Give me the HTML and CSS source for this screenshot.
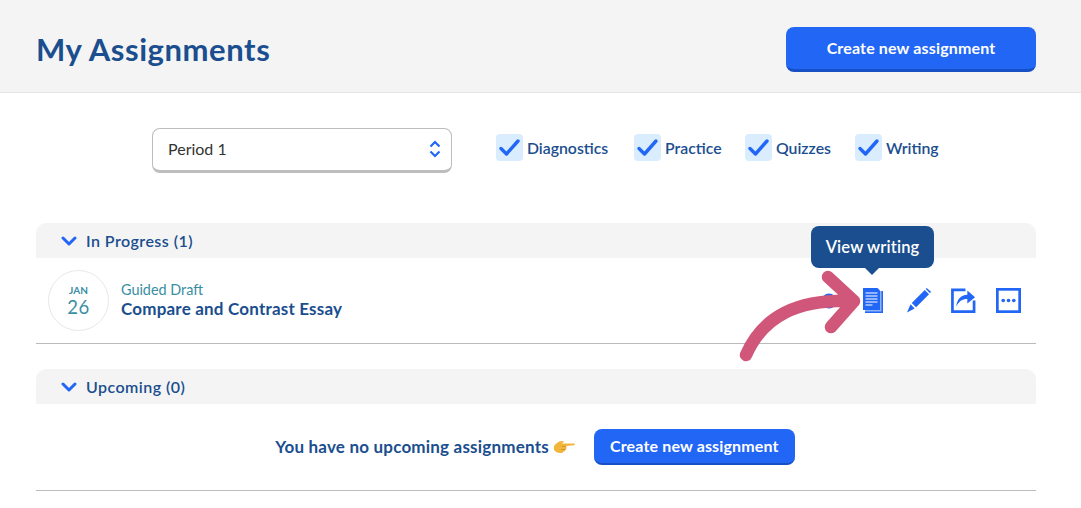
FILE: index.html
```html
<!DOCTYPE html>
<html lang="en">
<head>
<meta charset="utf-8">
<title>My Assignments</title>
<link rel="stylesheet" href="styles.css">
</head>
<body>
<header class="page-head">
  <h1 class="page-title">My Assignments</h1>
  <button class="btn btn-large">Create new assignment</button>
</header>
<section class="filters">
  <div class="select">
    <span>Period 1</span>
    <svg class="select-arrows" width="12" height="18" viewBox="0 0 12 18"><path d="M1.5 6.5 6 2l4.500 4.500M1.500 11.500 6 16l4.500-4.500" fill="none" stroke="#2266f6" stroke-width="2.200"/></svg>
  </div>
  <div class="checks">
    <label class="check"><span class="box"><svg width="27" height="27" viewBox="0 0 27 27"><path d="M5 14.500 10.500 20 22 7" fill="none" stroke="#2266f6" stroke-width="3.400" stroke-linecap="round" stroke-linejoin="round"/></svg></span>Diagnostics</label>
    <label class="check"><span class="box"><svg width="27" height="27" viewBox="0 0 27 27"><path d="M5 14.500 10.500 20 22 7" fill="none" stroke="#2266f6" stroke-width="3.400" stroke-linecap="round" stroke-linejoin="round"/></svg></span>Practice</label>
    <label class="check"><span class="box"><svg width="27" height="27" viewBox="0 0 27 27"><path d="M5 14.500 10.500 20 22 7" fill="none" stroke="#2266f6" stroke-width="3.400" stroke-linecap="round" stroke-linejoin="round"/></svg></span>Quizzes</label>
    <label class="check"><span class="box"><svg width="27" height="27" viewBox="0 0 27 27"><path d="M5 14.500 10.500 20 22 7" fill="none" stroke="#2266f6" stroke-width="3.400" stroke-linecap="round" stroke-linejoin="round"/></svg></span>Writing</label>
  </div>
</section>
<main class="lists">
  <section class="group">
    <div class="group-head">
      <svg width="16" height="10" viewBox="0 0 16 10"><path d="M2 2l6 6 6-6" fill="none" stroke="#2266f6" stroke-width="3" stroke-linecap="round" stroke-linejoin="round"/></svg>
      <span>In Progress (1)</span>
    </div>
    <div class="row">
      <div class="date"><span class="month">JAN</span><span class="day">26</span></div>
      <div class="info">
        <div class="kind">Guided Draft</div>
        <div class="name">Compare and Contrast Essay</div>
      </div>
      <div class="actions">
        <svg class="ic-hidden" width="16" height="16" viewBox="0 0 16 16"><circle cx="8" cy="8" r="7.500" fill="#2266f6"/></svg>
        <svg class="ic-doc" width="22" height="26" viewBox="0 0 22 26">
          <path d="M3 3h18v22H3z" fill="#2266f6"/>
          <path d="M3 3h16.500v20.500H3z" fill="#8fb2fb"/>
          <path d="M1 0h14.500L18 2.500V22H1z" fill="#2266f6"/>
          <path d="M3.500 5h12M3.500 8h12M3.500 11h12M3.500 14h12M3.500 17h7" stroke="#fff" stroke-width="1.200"/>
        </svg>
        <svg class="ic" width="25" height="25" viewBox="0 0 26 26"><path d="M6 15.500 19.500 2l4.500 4.500L10.500 20z" fill="#2266f6"/><path d="M20.500 1l1-1 4.500 4-1 1.500z" fill="#2266f6"/><path d="M4.800 17 9 21.200 1 25.500z" fill="#2266f6"/></svg>
        <svg class="ic" width="25" height="25" viewBox="0 0 26 26"><path d="M15 2H1.500v22.500H24V13" fill="none" stroke="#2266f6" stroke-width="2.800"/><path d="M5.500 19.500C6 12 10 7.500 17 7V2.500L25 9.500l-8 6.500v-4.500c-5.500 0-9 2.500-11.500 8z" fill="#2266f6"/></svg>
        <svg class="ic" width="25" height="25" viewBox="0 0 26 26"><rect x="1.400" y="1.400" width="23.200" height="23.200" fill="none" stroke="#2266f6" stroke-width="2.800"/><circle cx="7.500" cy="13" r="1.900" fill="#2266f6"/><circle cx="13" cy="13" r="1.900" fill="#2266f6"/><circle cx="18.500" cy="13" r="1.900" fill="#2266f6"/></svg>
      </div>
    </div>
  </section>
  <section class="group group-next">
    <div class="group-head">
      <svg width="16" height="10" viewBox="0 0 16 10"><path d="M2 2l6 6 6-6" fill="none" stroke="#2266f6" stroke-width="3" stroke-linecap="round" stroke-linejoin="round"/></svg>
      <span>Upcoming (0)</span>
    </div>
    <div class="empty">
      <span class="empty-text">You have no upcoming assignments</span>
      <svg class="hand" width="21" height="14" viewBox="0 0 21 14"><path d="M0 6c2-3 5-5 8-5l2 .5c-.5 1-1.500 1.500-2.500 2L20 3.500c1.300.3 1.300 1.500 0 1.700L12 6c1 1.500 .5 3-.5 3.500-.2 1.500-1 2-2 2-.5 1-1.500 1.500-3 1.500C3 13 1 11 0 10z" fill="#f2b53c"/><path d="M8 6.500h4M7 9.500h4.500" stroke="#c98a1e" stroke-width=".7" fill="none"/></svg>
      <button class="btn btn-small">Create new assignment</button>
    </div>
  </section>
  <div class="tooltip">View writing</div>
  <svg class="arrow" width="130" height="100" viewBox="0 0 130 100"><path d="M11 92C28 53 62 36 119 38M93 14l26 24-23 26" fill="none" stroke="#d0577a" stroke-width="12.500" stroke-linecap="round" stroke-linejoin="round"/></svg>
</main>
</body>
</html>
```
FILE: styles.css
```css
* { box-sizing: border-box; }
html, body { margin: 0; padding: 0; }
body {
  background: #fff;
  color: #1a4e8e;
  font-family: "Lato", "Noto Sans", sans-serif;
  height: 508px;
  overflow: hidden;
}
.page-head {
  height: 93px;
  background: #f4f4f4;
  border-bottom: 1px solid #e6e6e6;
  padding: 6px 45px 0 36px;
  display: flex;
  align-items: center;
  justify-content: space-between;
}
.page-title {
  margin: 0;
  font-size: 31px;
  font-weight: 700;
  letter-spacing: .56px;
  color: #1a4e8e;
}
.btn {
  border: 0;
  border-bottom: 3px solid #1650c4;
  background: #2266f6;
  color: #fff;
  font-family: inherit;
  font-weight: 700;
  font-size: 16px;
  letter-spacing: .15px;
}
.btn-large {
  width: 250px;
  height: 45px;
  border-radius: 8px;
}
.btn-small {
  width: 201px;
  height: 36px;
  border-radius: 8px;
  margin-left: 19px;
  border-bottom-width: 2px;
}
.filters {
  display: flex;
  align-items: flex-start;
  padding: 35px 0 0 152px;
  height: 130px;
}
.select {
  width: 300px;
  height: 45px;
  border: 1px solid #bdbdbd;
  border-bottom: 3px solid #bdbdbd;
  border-radius: 8px;
  padding: 0 10px 3px 15px;
  display: flex;
  align-items: center;
  justify-content: space-between;
  font-size: 16px;
  color: #333;
}
.select-arrows { margin-top: 2px; }
.checks {
  display: grid;
  grid-template-columns: 138px 111px 110px auto;
  margin: 6px 0 0 44px;
}
.check {
  display: flex;
  align-items: center;
  gap: 4px;
  font-size: 15.800px;
  font-weight: 600;
  color: #1a4e8e;
  height: 27px;
  line-height: 25px;
}
.box {
  width: 27px;
  height: 27px;
  background: #d9edff;
  border-radius: 4px;
  display: block;
}
.box svg { display: block; }
.lists {
  position: relative;
  margin: 0 45px 0 36px;
}
.group-head {
  height: 35px;
  background: #f4f4f4;
  border-radius: 10px 10px 0 0;
  padding: 0 0 0 25px;
  display: flex;
  align-items: center;
  gap: 9px;
  font-size: 16px;
  letter-spacing: .45px;
  font-weight: 600;
}
.group-next { margin-top: 25px; }
.row {
  height: 86px;
  border-bottom: 1px solid #bbb;
  padding: 0 15px 0 12px;
  display: flex;
  align-items: center;
}
.date {
  width: 61px;
  height: 61px;
  border: 1px solid #e8e8e8;
  border-radius: 50%;
  display: flex;
  flex-direction: column;
  align-items: center;
  justify-content: center;
  color: #3a8ea3;
}
.month { font-size: 10px; font-weight: 700; line-height: 13px; }
.day { font-size: 18.500px; letter-spacing: .5px; line-height: 21px; }
.info { margin: 0 0 2px 12px; }
.kind { font-size: 14.400px; line-height: 18px; color: #3a8ea3; }
.name { font-size: 17px; font-weight: 700; letter-spacing: .2px; line-height: 20px; }
.actions {
  margin-left: auto;
  display: flex;
  align-items: center;
  gap: 20px;
}
.actions svg { display: block; }
.ic-hidden { margin-right: 5px; }
.ic-doc { margin-right: 2px; }
.empty {
  height: 87px;
  border-bottom: 1px solid #bbb;
  display: flex;
  align-items: center;
  justify-content: center;
  padding: 0 2px 1px 0;
}
.empty-text { font-size: 17px; font-weight: 700; letter-spacing: .2px; }
.hand { margin-left: 5px; }
.tooltip {
  position: absolute;
  left: 775px;
  top: 3px;
  width: 123px;
  height: 42px;
  background: #1a4e8e;
  border-radius: 8px;
  color: #fff;
  font-size: 16.500px;
  letter-spacing: .15px;
  font-weight: 600;
  display: flex;
  align-items: center;
  justify-content: center;
}
.tooltip::after {
  content: "";
  position: absolute;
  left: 54px;
  bottom: -7px;
  border-left: 7px solid transparent;
  border-right: 7px solid transparent;
  border-top: 7px solid #1a4e8e;
}
.arrow {
  position: absolute;
  left: 699px;
  top: 40px;
}
```
